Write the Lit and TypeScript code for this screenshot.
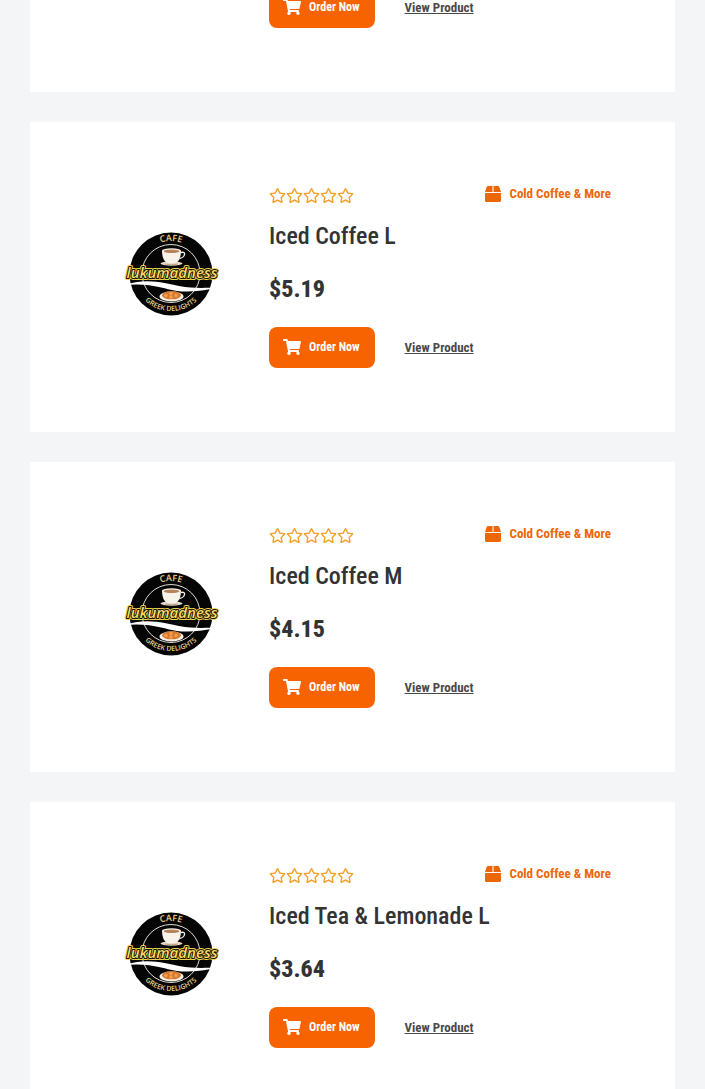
import { LitElement, html, css, svg } from "lit";
import { customElement, property } from "lit/decorators.js";

interface Product {
  name: string;
  price: string;
  category: string;
}

const PRODUCTS: Product[] = [
  { name: "Iced Coffee L", price: "$5.19", category: "Cold Coffee & More" },
  { name: "Iced Coffee M", price: "$4.15", category: "Cold Coffee & More" },
  { name: "Iced Tea & Lemonade L", price: "$3.64", category: "Cold Coffee & More" },
];

const STAR =
  "M528.1 171.5L382 150.2 316.7 17.8c-11.700-23.600-45.600-23.900-57.400 0L194 150.200 47.900 171.500c-26.200 3.800-36.700 36.100-17.700 54.600l105.700 103-25 145.500c-4.500 26.300 23.200 46 46.400 33.700L288 439.600l130.700 68.700c23.200 12.200 50.900-7.400 46.400-33.700l-25-145.500 105.700-103c19-18.500 8.500-50.800-17.700-54.600zM388.600 312.300l23.700 138.400L288 385.400l-124.300 65.300 23.700-138.400-100.600-98 139-20.200 62.200-126 62.200 126 139 20.200-100.600 98z";
const CART =
  "M528.120 301.319l47.273-208C578.806 78.301 567.391 64 551.990 64H159.208l-9.166-44.810C147.758 8.021 137.930 0 126.529 0H24C10.745 0 0 10.745 0 24v16c0 13.255 10.745 24 24 24h69.883l70.248 343.435C147.325 417.100 136 435.222 136 456c0 30.928 25.072 56 56 56s56-25.072 56-56c0-15.674-6.447-29.835-16.824-40h209.647C430.447 426.165 424 440.326 424 456c0 30.928 25.072 56 56 56s56-25.072 56-56c0-22.172-12.888-41.332-31.579-50.405l5.517-24.276c3.413-15.018-8.002-29.319-23.403-29.319H218.117l-6.545-32h293.145c11.206 0 20.920-7.754 23.403-18.681z";
const BOX =
  "M509.500 184.600L458.900 32.800C452.400 13.200 434.100 0 413.400 0H272v192h238.700c-.4-2.500-.4-5-1.200-7.400zM240 0H98.600c-20.700 0-39 13.200-45.500 32.800L2.500 184.600c-.8 2.400-.8 4.900-1.200 7.400H240V0zM0 224v240c0 26.500 21.500 48 48 48h416c26.500 0 48-21.500 48-48V224H0z";

@customElement("cafe-logo")
export class CafeLogo extends LitElement {
  static styles = css`
    :host {
      display: block;
    }
    .logo {
      display: block;
      width: 100%;
    }
    .arc {
      font-family: "Open Sans", "Liberation Sans", sans-serif;
      font-weight: 600;
      fill: #ecd08c;
      text-anchor: middle;
    }
    .name {
      font-family: "Open Sans", "Liberation Sans", sans-serif;
      font-style: italic;
      font-weight: 600;
      font-size: 15px;
      text-anchor: middle;
      stroke-linejoin: round;
    }
    .name-glow {
      fill: #f0d24e;
      stroke: #f0d24e;
      stroke-width: 4px;
    }
    .name-edge {
      fill: #141005;
      stroke: #141005;
      stroke-width: 2px;
    }
    .name-face {
      fill: #f9dc66;
    }
  `;

  render() {
    return html`
      <svg class="logo" viewBox="0 0 100 100" role="img" aria-label="Cafe Lukumadness Greek Delights">
        <defs>
          <path id="top-arc" d="M17 50a33 33 0 0 1 66 0" />
          <path id="bottom-arc" d="M12 49a38 38 0 0 0 76 0" />
        </defs>
        <circle cx="50" cy="50" r="41.500" fill="#050505" />
        <circle cx="50" cy="49.500" r="29" fill="none" stroke="#f4f1ea" stroke-width="0.900" />
        <text class="arc" font-size="9"><textPath href="#top-arc" startOffset="50%">CAFE</textPath></text>
        <text class="arc" font-size="7"><textPath href="#bottom-arc" startOffset="50%">GREEK DELIGHTS</textPath></text>
        <ellipse cx="50.500" cy="39.500" rx="11" ry="2.200" fill="#e8dccd" />
        <path d="M41 26.500h19q0 11-6 12.500h-7q-6-1.500-6-12.500z" fill="#f8f3ea" />
        <path d="M60 28.500q4-1 3.500 2t-5 4" fill="none" stroke="#f8f3ea" stroke-width="1.400" />
        <ellipse cx="50.500" cy="27" rx="9.500" ry="2.700" fill="#f8f3ea" />
        <ellipse cx="50.500" cy="27.300" rx="7.800" ry="1.800" fill="#b78358" />
        <path d="M44 40q6 1.600 13 0" fill="none" stroke="#b08a6a" stroke-width="0.700" />
        <path d="M2 61.500C26 53 44 59.500 58 62S82 64 97 63.500C82 67 68 68.500 56 67S28 58 2 61.500z" fill="#fff" />
        <ellipse cx="50.500" cy="72.500" rx="12" ry="5" fill="#f5efe6" />
        <ellipse cx="50.500" cy="71.300" rx="9.500" ry="4" fill="#d9782c" />
        ${[
          [45, 71.500],
          [50, 69.500],
          [55, 71.500],
          [50, 73],
        ].map(([x, y]) => svg`<circle cx=${x} cy=${y} r="1.700" fill="#f0a050" />`)}
        <text class="name name-glow" x="51" y="54">lukumadness</text>
        <text class="name name-edge" x="51" y="54">lukumadness</text>
        <text class="name name-face" x="51" y="54">lukumadness</text>
      </svg>
    `;
  }
}

@customElement("product-actions")
export class ProductActions extends LitElement {
  static styles = css`
    :host {
      display: flex;
      align-items: center;
      gap: 30px;
    }
    .order {
      display: flex;
      align-items: center;
      gap: 8px;
      height: 41px;
      padding: 0 15px 2px 14px;
      border: 0;
      border-radius: 8px;
      background: #f76300;
      color: #fff;
      font-family: inherit;
      font-size: 12px;
      font-weight: 700;
      white-space: nowrap;
      cursor: pointer;
    }
    .cart {
      width: 18px;
      height: 16px;
      fill: currentColor;
    }
    .view {
      color: #4a4a4a;
      font-size: 13px;
      font-weight: 700;
      white-space: nowrap;
      text-decoration: underline;
    }
  `;

  render() {
    return html`
      <button class="order" type="button">
        <svg class="cart" viewBox="0 0 576 512" aria-hidden="true"><path d=${CART} /></svg>
        Order Now
      </button>
      <a class="view" href="#">View Product</a>
    `;
  }
}

@customElement("product-card")
export class ProductCard extends LitElement {
  @property({ attribute: false }) product!: Product;

  static styles = css`
    :host {
      display: grid;
      grid-template-columns: 3fr 7fr;
      align-items: center;
      padding: 64px;
      background: #fff;
    }
    .picture {
      width: 100px;
      margin: 0 auto;
      padding: 0 2px 6px 0;
    }
    .info {
      min-width: 0;
      padding-left: 20px;
    }
    .meta {
      display: flex;
      justify-content: space-between;
      align-items: flex-start;
      height: 18px;
    }
    .stars {
      display: flex;
      padding-top: 2px;
    }
    .star {
      width: 17px;
      height: 15px;
      fill: #f5a02a;
    }
    .category {
      display: flex;
      align-items: center;
      gap: 8px;
      color: #ec6707;
      font-size: 13px;
      font-weight: 700;
      line-height: 16px;
      text-decoration: none;
      white-space: nowrap;
    }
    .box {
      width: 16px;
      height: 16px;
      fill: currentColor;
    }
    .name {
      margin: 14px 0 0;
      font-size: 24px;
      font-weight: 500;
      line-height: 36px;
    }
    .price {
      margin: 17px 0 19px;
      font-size: 24px;
      font-weight: 800;
      line-height: 37px;
    }
  `;

  render() {
    const { name, price, category } = this.product;
    return html`
      <cafe-logo class="picture"></cafe-logo>
      <div class="info">
        <div class="meta">
          <div class="stars" role="img" aria-label="0 out of 5 stars">
            ${[0, 1, 2, 3, 4].map(
              () => html`<svg class="star" viewBox="0 0 576 512"><path d=${STAR} /></svg>`
            )}
          </div>
          <a class="category" href="#">
            <svg class="box" viewBox="0 0 512 512" aria-hidden="true"><path d=${BOX} /></svg>
            ${category}
          </a>
        </div>
        <h2 class="name">${name}</h2>
        <p class="price">${price}</p>
        <product-actions></product-actions>
      </div>
    `;
  }
}

@customElement("app-root")
export class AppRoot extends LitElement {
  static styles = css`
    :host {
      display: block;
      box-sizing: border-box;
      height: 100vh;
      overflow: hidden;
      padding: 0 30px;
      background: #f3f5f7;
      color: #333;
      font-family: "Liberation Sans Narrow", "Roboto Condensed", "Open Sans Condensed", "Liberation Sans", sans-serif;
    }
    .list {
      display: flex;
      flex-direction: column;
      gap: 30px;
    }
    .scrolled {
      display: grid;
      grid-template-columns: 3fr 7fr;
      padding: 0 64px 64px;
      background: #fff;
    }
    .scrolled-actions {
      grid-column: 2;
      margin-top: -13px;
      padding-left: 20px;
    }
  `;

  render() {
    return html`
      <main class="list">
        <section class="scrolled"><product-actions class="scrolled-actions"></product-actions></section>
        ${PRODUCTS.map((p) => html`<product-card .product=${p}></product-card>`)}
      </main>
    `;
  }
}
